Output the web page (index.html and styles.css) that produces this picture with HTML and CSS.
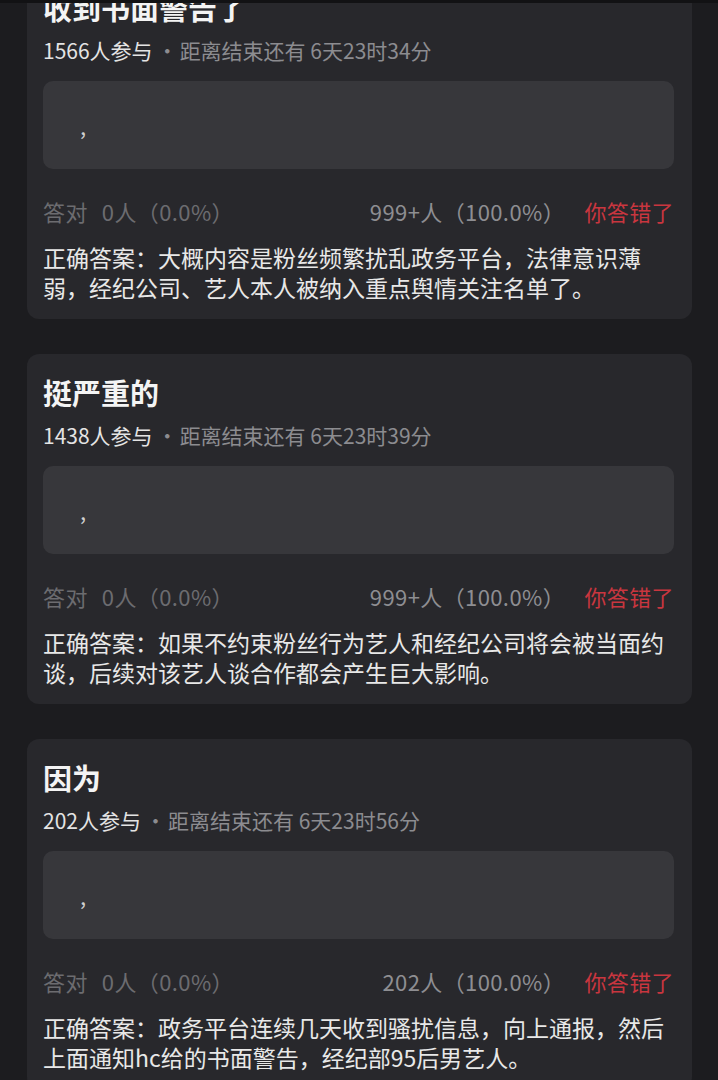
FILE: index.html
```html
<!DOCTYPE html>
<html lang="zh-CN">
<head>
    <meta charset="UTF-8">
    <meta name="viewport" content="width=device-width, initial-scale=1.0">
    <title>答题结果</title>
    <link rel="stylesheet" href="styles.css">
</head>
<body>
    <div class="list">
        <div class="card">
            <h3 class="title">收到书面警告了</h3>
            <div class="meta"><span class="count">1566人参与</span><span class="dot">·</span>距离结束还有 6天23时34分</div>
            <div class="answer-box">,</div>
            <div class="stats">
                <span class="right-count">答对<span class="num">0人（0.0%）</span></span>
                <span class="wrong">
                    <span class="wrong-count">999+人（100.0%）</span>
                    <span class="wrong-tag">你答错了</span>
                </span>
            </div>
            <p class="solution">正确答案：大概内容是粉丝频繁扰乱政务平台，法律意识薄弱，经纪公司、艺人本人被纳入重点舆情关注名单了。</p>
        </div>

        <div class="card">
            <h3 class="title">挺严重的</h3>
            <div class="meta"><span class="count">1438人参与</span><span class="dot">·</span>距离结束还有 6天23时39分</div>
            <div class="answer-box">,</div>
            <div class="stats">
                <span class="right-count">答对<span class="num">0人（0.0%）</span></span>
                <span class="wrong">
                    <span class="wrong-count">999+人（100.0%）</span>
                    <span class="wrong-tag">你答错了</span>
                </span>
            </div>
            <p class="solution">正确答案：如果不约束粉丝行为艺人和经纪公司将会被当面约谈，后续对该艺人谈合作都会产生巨大影响。</p>
        </div>

        <div class="card">
            <h3 class="title">因为</h3>
            <div class="meta"><span class="count">202人参与</span><span class="dot">·</span>距离结束还有 6天23时56分</div>
            <div class="answer-box">,</div>
            <div class="stats">
                <span class="right-count">答对<span class="num">0人（0.0%）</span></span>
                <span class="wrong">
                    <span class="wrong-count">202人（100.0%）</span>
                    <span class="wrong-tag">你答错了</span>
                </span>
            </div>
            <p class="solution">正确答案：政务平台连续几天收到骚扰信息，向上通报，然后上面通知hc给的书面警告，经纪部95后男艺人。</p>
        </div>
    </div>
</body>
</html>
```

FILE: styles.css
```css
html, body {
    height: 100%;
    overflow: hidden;
}
body {
    font-family: "Noto Sans CJK SC", "Noto Sans", sans-serif;
    background-color: #1c1c1f;
    color: #ececec;
    margin: 0;
    padding: 0;
    border-top: 3px solid #121214;
    box-sizing: border-box;
}
.list {
    display: flex;
    flex-direction: column;
    gap: 35px;
    padding: 0 26px 0 27px;
    margin-top: -34px;
}
.card {
    background: #28282c;
    border-radius: 12px;
    padding: 20px 18px 17px 16px;
}
.title {
    margin: 0;
    font-size: 29px;
    line-height: 36px;
    font-weight: bold;
    color: #f4f4f4;
}
.meta {
    margin-top: 11px;
    font-size: 21px;
    line-height: 28px;
    color: #8c8c90;
}
.count {
    color: #e4e4e4;
}
.dot {
    margin: 0 2px 0 4px;
}
.answer-box {
    margin-top: 17px;
    height: 88px;
    background: #37373b;
    border-radius: 10px;
    display: flex;
    align-items: center;
    padding-left: 37px;
    font-size: 22px;
    color: #d0d0d0;
}
.stats {
    margin-top: 27px;
    display: flex;
    justify-content: space-between;
    font-size: 22px;
    line-height: 30px;
    letter-spacing: 0.4px;
}
.right-count {
    color: #6c6c70;
}
.num {
    margin-left: 14px;
}
.wrong-count {
    color: #8e8e92;
}
.wrong-tag {
    color: #c9363f;
    margin-left: 14px;
}
.solution {
    margin: 16px 0 0;
    font-size: 23px;
    line-height: 30px;
    color: #e8e8e8;
}
```
